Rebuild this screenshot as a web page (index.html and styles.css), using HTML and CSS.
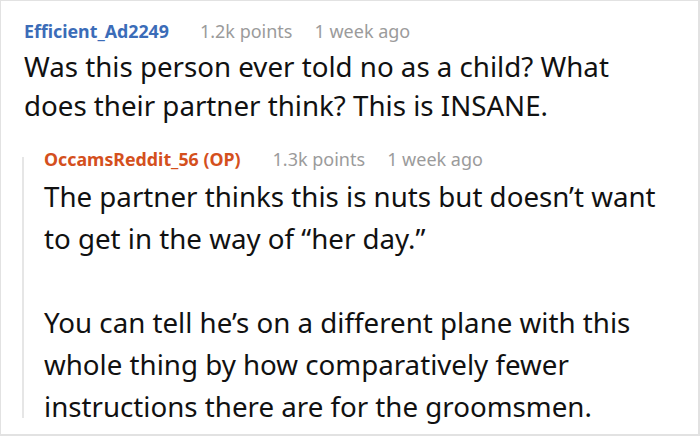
FILE: index.html
```html
<!DOCTYPE html>
<html>
<head>
<meta charset="utf-8">
<link rel="stylesheet" href="styles.css">
</head>
<body>
<div class="card">
  <div class="comment">
    <div class="meta">
      <span class="author">Efficient_Ad2249</span>
      <span class="points">1.2k points</span>
      <span class="time">1 week ago</span>
    </div>
    <p class="body">Was this person ever told no as a child? What does their partner think? This is INSANE.</p>
  </div>
  <div class="reply">
    <div class="meta">
      <span class="author op">OccamsReddit_56 (OP)</span>
      <span class="points">1.3k points</span>
      <span class="time">1 week ago</span>
    </div>
    <p class="body reply-body">The partner thinks this is nuts but doesn’t want to get in the way of “her day.”</p>
    <p class="body reply-body">You can tell he’s on a different plane with this whole thing by how comparatively fewer instructions there are for the groomsmen.</p>
  </div>
</div>
</body>
</html>
```
FILE: styles.css
```css
html, body {
  margin: 0;
  padding: 0;
  background: #fff;
}
.card {
  width: 700px;
  height: 436px;
  box-sizing: border-box;
  border: 2px solid #e2e2e2;
  border-top-width: 1px;
  border-left-width: 1px;
  padding: 14px 23px 0 23px;
  font-family: "Noto Sans", sans-serif;
  color: #111;
  overflow: hidden;
}
.meta {
  display: flex;
  align-items: baseline;
  font-size: 18px;
  line-height: 32px;
  white-space: nowrap;
}
.author {
  font-size: 17.8px;
  font-weight: 700;
  color: #3b6cb8;
  margin-right: 31px;
}
.author.op {
  color: #d4501d;
  margin-right: 32px;
}
.points, .time {
  color: #9b9b9b;
}
.points {
  margin-right: 22px;
}
.body {
  margin: 0;
  font-size: 27.7px;
  line-height: 39px;
}
.reply {
  position: relative;
  margin-top: 18px;
  padding-left: 20px;
}
.reply::before {
  content: "";
  position: absolute;
  left: -2px;
  top: 14px;
  bottom: 9px;
  width: 2px;
  background: #e6e6e6;
}
.reply-body {
  line-height: 42px;
}
.reply-body + .reply-body {
  margin-top: 42px;
}
```
